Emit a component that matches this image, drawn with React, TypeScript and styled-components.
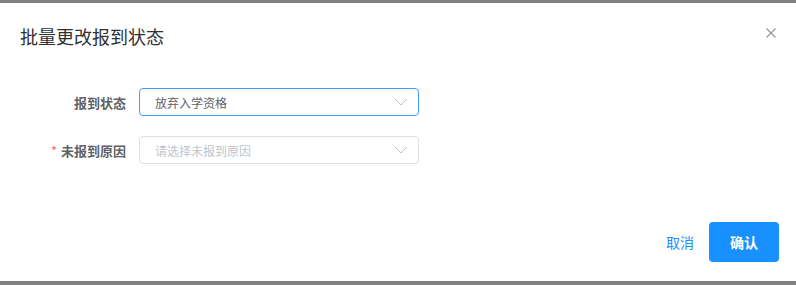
import React from 'react';
import styled, { createGlobalStyle } from 'styled-components';

const GlobalStyle = createGlobalStyle`
  html, body {
    margin: 0;
    padding: 0;
    background: #ffffff;
  }
  body {
    font-family: "Noto Sans CJK SC", "Noto Sans", sans-serif;
  }
`;

const Frame = styled.div`
  box-sizing: border-box;
  width: 796px;
  height: 285px;
  border-top: 3px solid #808080;
  border-bottom: 4px solid #808080;
  background: #fff;
  display: flex;
  flex-direction: column;
`;

const Header = styled.div`
  display: flex;
  justify-content: space-between;
  align-items: flex-start;
  padding: 21px 20px 0 20px;
`;

const Title = styled.span`
  font-size: 18px;
  line-height: 24px;
  color: #303133;
`;

const CloseButton = styled.button`
  border: none;
  background: none;
  padding: 0;
  margin-top: 4px;
  width: 10px;
  height: 10px;
  cursor: pointer;
  display: flex;
  svg {
    display: block;
  }
`;

const Body = styled.div`
  display: flex;
  flex-direction: column;
  gap: 20px;
  padding: 40px 0 0 0;
  flex: 1;
`;

const FormRow = styled.div`
  display: flex;
  align-items: center;
`;

const Label = styled.label`
  width: 126px;
  box-sizing: border-box;
  text-align: right;
  margin-right: 13px;
  font-size: 13px;
  font-weight: bold;
  color: #606266;
  white-space: nowrap;
`;

const Required = styled.span`
  color: #f56c6c;
  margin-right: 4px;
  font-weight: normal;
`;

const Select = styled.div<{ $focused?: boolean }>`
  box-sizing: border-box;
  width: 280px;
  height: 28px;
  border: 1px solid ${({ $focused }) => ($focused ? '#409eff' : '#dcdfe6')};
  border-radius: 4px;
  display: flex;
  align-items: center;
  justify-content: space-between;
  padding: 0 10px 0 15px;
`;

const SelectText = styled.span<{ $placeholder?: boolean }>`
  font-size: 12px;
  color: ${({ $placeholder }) => ($placeholder ? '#c0c4cc' : '#606266')};
`;

const Footer = styled.div`
  display: flex;
  justify-content: flex-end;
  align-items: center;
  gap: 15px;
  padding: 0 17px 19px 0;
`;

const TextButton = styled.button`
  border: none;
  background: none;
  padding: 0;
  font-family: inherit;
  font-size: 14px;
  color: #1890ff;
  cursor: pointer;
`;

const PrimaryButton = styled.button`
  width: 70px;
  height: 40px;
  border: none;
  border-radius: 4px;
  background: #1890ff;
  color: #fff;
  font-family: inherit;
  font-size: 14px;
  font-weight: bold;
  cursor: pointer;
`;

const Chevron = () => (
  <svg width="14" height="8" viewBox="0 0 14 8" fill="none">
    <path d="M1 1l6 6 6-6" stroke="#c0c4cc" strokeWidth="1" />
  </svg>
);

const App: React.FC = () => {
  return (
    <Frame>
      <GlobalStyle />
      <Header>
        <Title>批量更改报到状态</Title>
        <CloseButton aria-label="close">
          <svg width="10" height="10" viewBox="0 0 10 10">
            <path d="M0.5 0.5l9 9M9.5 0.5l-9 9" stroke="#909399" strokeWidth="1.1" />
          </svg>
        </CloseButton>
      </Header>
      <Body>
        <FormRow>
          <Label>报到状态</Label>
          <Select $focused>
            <SelectText>放弃入学资格</SelectText>
            <Chevron />
          </Select>
        </FormRow>
        <FormRow>
          <Label>
            <Required>*</Required>未报到原因
          </Label>
          <Select>
            <SelectText $placeholder>请选择未报到原因</SelectText>
            <Chevron />
          </Select>
        </FormRow>
      </Body>
      <Footer>
        <TextButton>取消</TextButton>
        <PrimaryButton>确认</PrimaryButton>
      </Footer>
    </Frame>
  );
};

export default App;
